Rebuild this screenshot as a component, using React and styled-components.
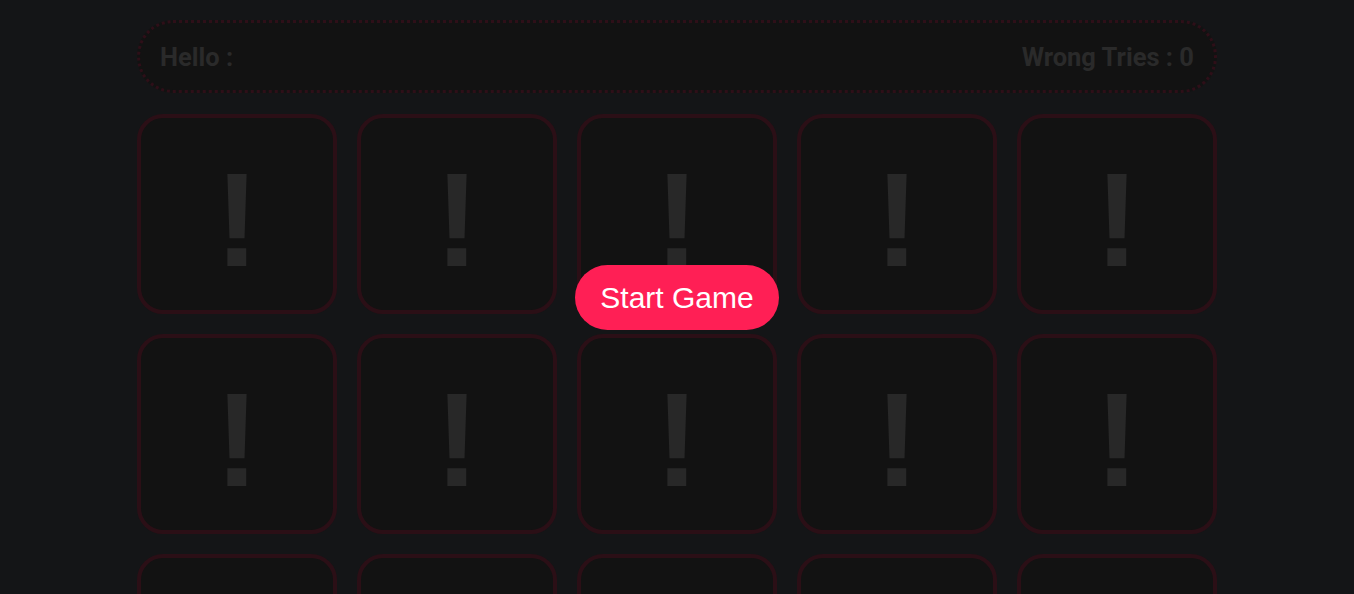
import styled, { createGlobalStyle } from "styled-components";

const GlobalStyle = createGlobalStyle`
  html, body {
    margin: 0;
    padding: 0;
    background: #141517;
    overflow: hidden;
  }
  * { box-sizing: border-box; }
`;

const Page = styled.main`
  width: 1080px;
  margin: 0 auto;
  padding-top: 20px;
  display: flex;
  flex-direction: column;
  gap: 21px;
  font-family: Roboto, "Liberation Sans", sans-serif;
`;

const InfoBar = styled.header`
  height: 73px;
  display: flex;
  align-items: center;
  justify-content: space-between;
  padding: 0 20px;
  background: #121212;
  border: 3px dotted #2e0f18;
  border-radius: 36px;
  color: #2a2a2a;
  font-size: 25.5px;
  font-weight: 700;
`;

const Board = styled.section`
  display: grid;
  grid-template-columns: repeat(5, 200px);
  gap: 20px;
`;

const Card = styled.div`
  width: 200px;
  height: 200px;
  display: flex;
  align-items: center;
  justify-content: center;
  background: #121212;
  border: 4px solid #2b0f16;
  border-radius: 26px;
  color: #282828;
  font-family: "Liberation Sans", Arial, sans-serif;
  font-size: 134px;
  font-weight: 700;
  line-height: 1;
  padding-top: 12px;
`;

const Overlay = styled.div`
  position: fixed;
  inset: 0;
  display: flex;
  align-items: center;
  justify-content: center;
`;

const StartButton = styled.button`
  width: 204px;
  height: 65px;
  border: none;
  border-radius: 33px;
  background: #ff1f55;
  color: #ffffff;
  font-family: "Liberation Sans", Arial, sans-serif;
  font-size: 30px;
  padding-top: 2px;
  cursor: pointer;
`;

const cards = Array.from({ length: 15 }, (_, i) => i);

export default function App() {
  return (
    <>
      <GlobalStyle />
      <Page>
        <InfoBar>
          <span>Hello :</span>
          <span>Wrong Tries : 0</span>
        </InfoBar>
        <Board>
          {cards.map((i) => (
            <Card key={i}>!</Card>
          ))}
        </Board>
      </Page>
      <Overlay>
        <StartButton>Start Game</StartButton>
      </Overlay>
    </>
  );
}
